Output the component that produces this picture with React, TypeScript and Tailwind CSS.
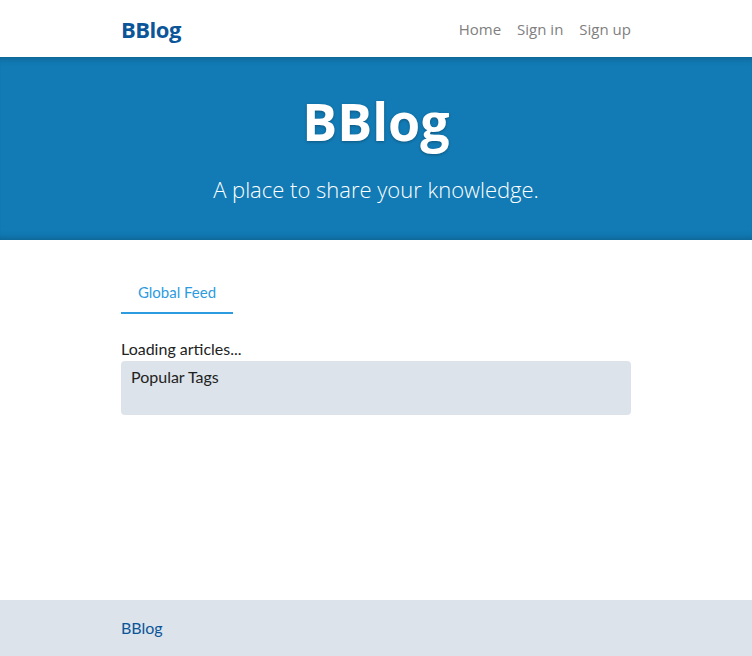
export default function App() {
  return (
    <div className="min-h-[656px] flex flex-col bg-white" style={{ fontFamily: "Lato, 'Open Sans', sans-serif" }}>
      <nav className="h-[57px] flex items-center">
        <div className="w-[510px] mx-auto flex items-center justify-between">
          <a className="text-[22px] font-bold text-[#0b5598] tracking-[-0.5px] leading-none" style={{ fontFamily: "'Open Sans', sans-serif" }}>BBlog</a>
          <ul className="flex items-center gap-[16px] text-[15px] text-[#808080] mt-[2px]" style={{ fontFamily: "'Open Sans', sans-serif" }}>
            <li>Home</li>
            <li>Sign in</li>
            <li>Sign up</li>
          </ul>
        </div>
      </nav>
      <div className="h-[183px] bg-[#127bb5] shadow-[inset_0_8px_8px_-8px_rgba(0,0,0,0.3),inset_0_-8px_8px_-8px_rgba(0,0,0,0.3)] flex flex-col items-center text-white">
        <h1 className="mt-[32px] text-[52px] font-bold leading-[64px] [text-shadow:0_1px_3px_rgba(0,0,0,0.3)]" style={{ fontFamily: "'Open Sans', sans-serif" }}>BBlog</h1>
        <p className="mt-[21px] text-[22px] font-light leading-[30px]" style={{ fontFamily: "'Open Sans', sans-serif" }}>A place to share your knowledge.</p>
      </div>
      <div className="w-[510px] mx-auto mt-[33px]">
        <div className="flex">
          <div className="w-[112px] h-[41px] flex items-center justify-center text-[15px] text-[#2d9be0] border-b-2 border-[#2d9be0] pb-[1px]">Global Feed</div>
        </div>
        <div className="mt-[26px] text-[16px] text-[#222] leading-[18px]">Loading articles...</div>
        <div className="mt-[3px] h-[54px] bg-[#dce3ea] rounded-[4px] px-[10px] pt-[6px] text-[16px] text-[#222] leading-[20px]">Popular Tags</div>
      </div>
      <footer className="mt-auto h-[56px] bg-[#dce3ea] flex items-center">
        <div className="w-[510px] mx-auto text-[16px] text-[#0b5598]">BBlog</div>
      </footer>
    </div>
  );
}
